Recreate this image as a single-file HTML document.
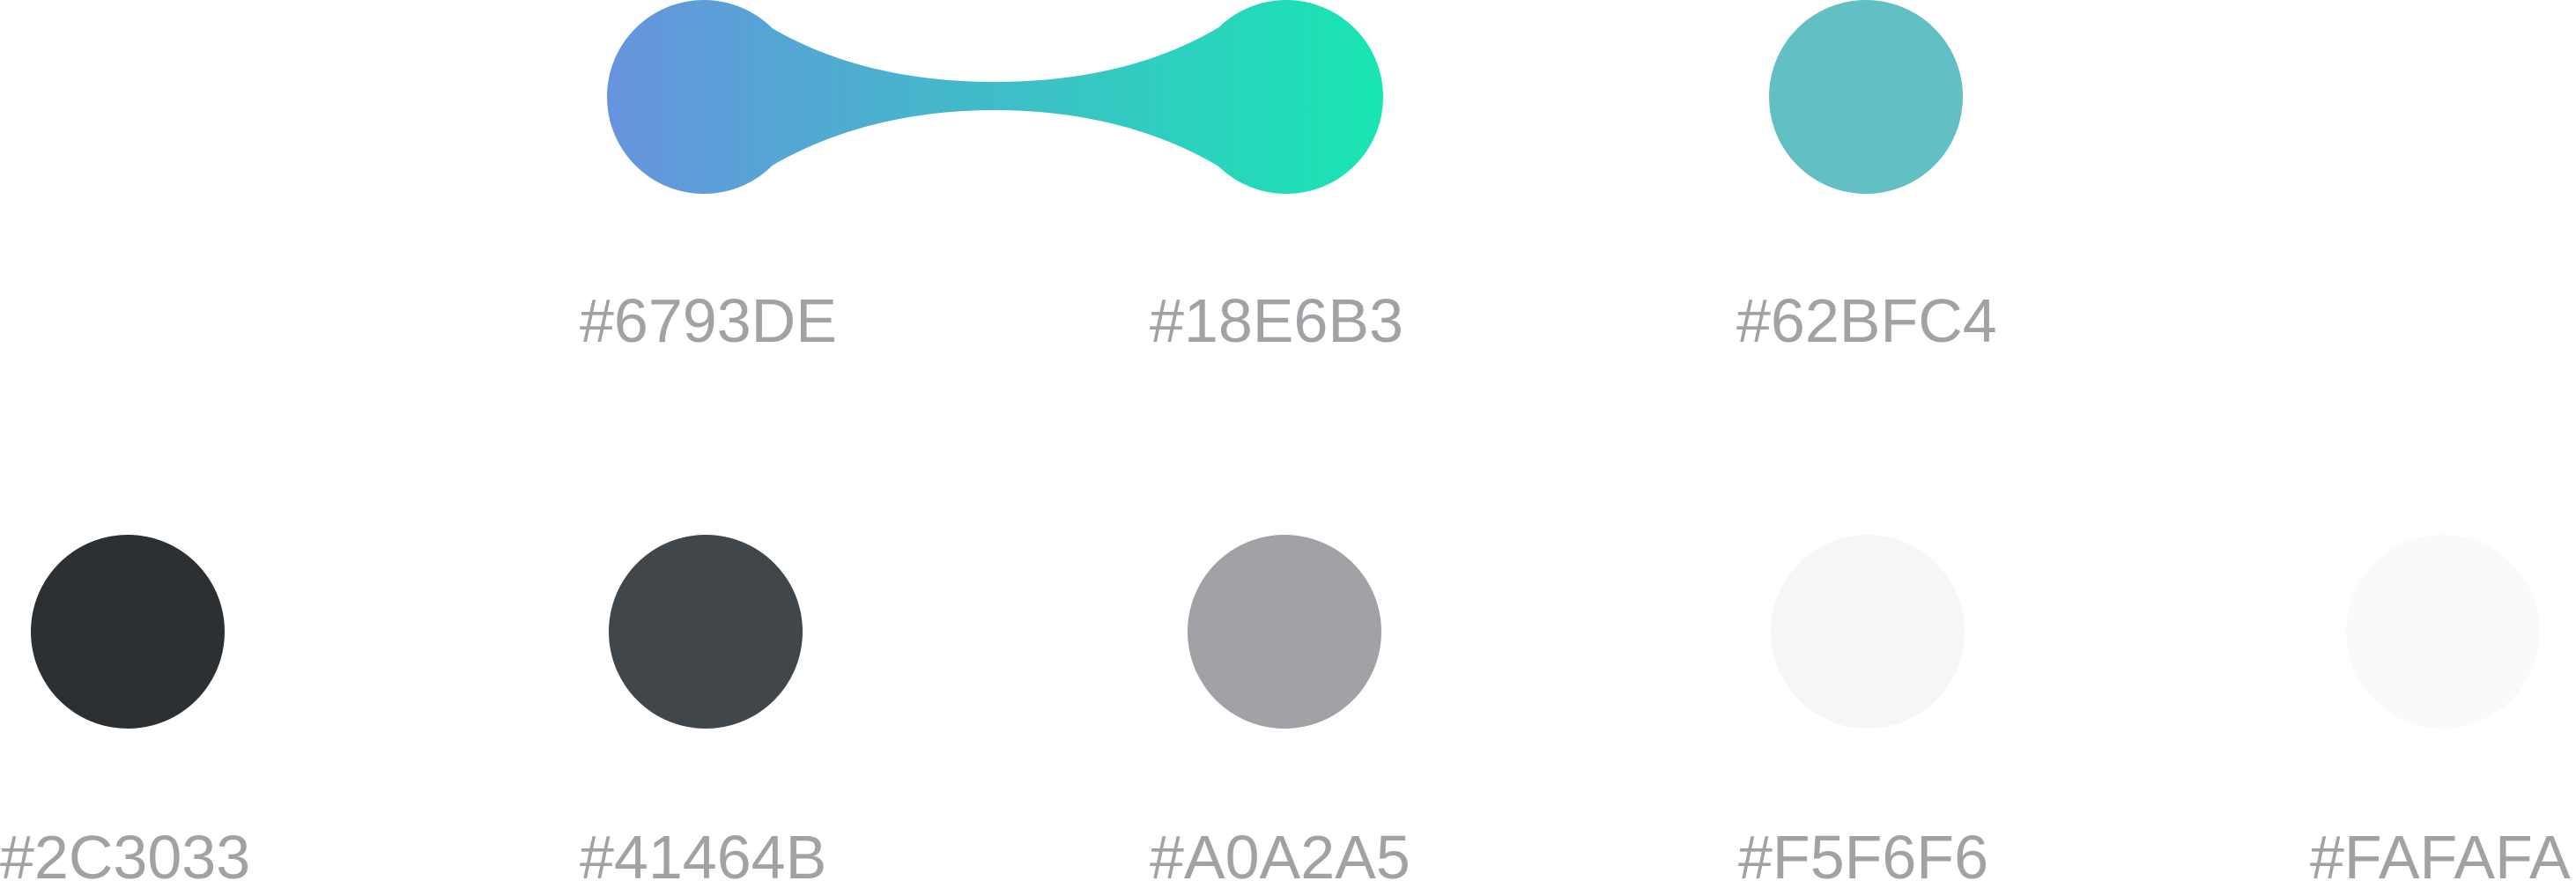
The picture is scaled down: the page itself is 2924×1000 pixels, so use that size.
<!DOCTYPE html>
<html><head><style>
html,body{margin:0;padding:0;background:#fff;width:2924px;height:1000px;overflow:hidden}
svg{position:absolute;left:0;top:0}
text{font-family:"Liberation Sans",sans-serif;font-size:70px;fill:#a0a2a5}
</style></head><body>
<svg width="2924" height="1000" viewBox="0 0 2924 1000">
<defs><linearGradient id="g" x1="689" y1="0" x2="1570" y2="0" gradientUnits="userSpaceOnUse">
<stop offset="0" stop-color="#6793DE"/><stop offset="1" stop-color="#18E6B3"/></linearGradient></defs>
<g fill="url(#g)">
<circle cx="799" cy="110" r="110"/>
<circle cx="1460" cy="110" r="110"/>
<path d="M860,22 C950,80 1050,93 1129,93 C1208,93 1310,80 1398,22 L1398,198 C1310,140 1208,125 1129,125 C1050,125 950,140 860,198 Z"/>
</g>
<circle cx="2118" cy="110" r="110" fill="#62BFC4"/>
<circle cx="145" cy="717" r="110" fill="#2C3033"/>
<circle cx="801" cy="717" r="110" fill="#41464B"/>
<circle cx="1458" cy="717" r="110" fill="#A0A2A5"/>
<circle cx="2120" cy="717" r="110" fill="#F5F6F6"/>
<circle cx="2773" cy="717" r="110" fill="#FAFAFA"/>
<text x="658" y="388">#6793DE</text>
<text x="1305" y="388">#18E6B3</text>
<text x="1971" y="388">#62BFC4</text>
<text x="0" y="997">#2C3033</text>
<text x="658" y="997">#41464B</text>
<text x="1305" y="997">#A0A2A5</text>
<text x="1973" y="997">#F5F6F6</text>
<text x="2622" y="997">#FAFAFA</text>
</svg>
</body></html>
